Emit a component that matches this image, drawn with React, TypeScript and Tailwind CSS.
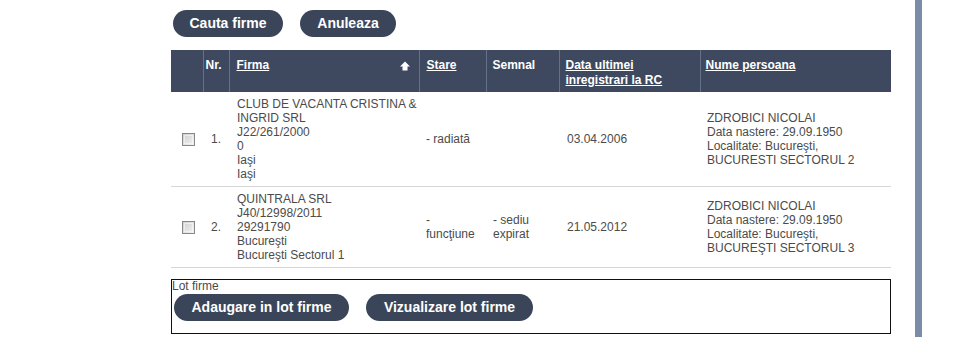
import React from "react";

function Checkbox() {
  return (
    <div className="w-[13px] h-[13px] border border-[#888] bg-gradient-to-br from-[#cfcfcf] to-[#f2f2f2] p-[1px]">
      <div className="w-full h-full border border-[#fafafa]/60" />
    </div>
  );
}

function SortUp() {
  return (
    <svg width="10" height="10" viewBox="0 0 10 10" className="block">
      <path d="M5 0.5 L10 5.5 L7.5 5.5 L7.5 9.5 L2.5 9.5 L2.5 5.5 L0 5.5 Z" fill="#ffffff" />
    </svg>
  );
}

function Pill({ children, w }: { children: React.ReactNode; w: string }) {
  return (
    <div
      className={`${w} h-[27px] rounded-full bg-[#3b4559] text-white font-bold text-[14px] leading-[27px] text-center`}
    >
      {children}
    </div>
  );
}

const rows = [
  {
    nr: "1.",
    firma: ["CLUB DE VACANTA CRISTINA &", "INGRID SRL", "J22/261/2000", "0", "Iaşi", "Iaşi"],
    stare: ["- radiată"],
    semnal: [] as string[],
    data: "03.04.2006",
    nume: ["ZDROBICI NICOLAI", "Data nastere: 29.09.1950", "Localitate: Bucureşti,", "BUCURESTI SECTORUL 2"],
  },
  {
    nr: "2.",
    firma: ["QUINTRALA SRL", "J40/12998/2011", "29291790", "Bucureşti", "Bucureşti Sectorul 1"],
    stare: ["-", "funcţiune"],
    semnal: ["- sediu", "expirat"],
    data: "21.05.2012",
    nume: ["ZDROBICI NICOLAI", "Data nastere: 29.09.1950", "Localitate: Bucureşti,", "BUCUREŞTI SECTORUL 3"],
  },
];

function Lines({ items }: { items: string[] }) {
  return (
    <>
      {items.map((t, i) => (
        <div key={i} className="whitespace-nowrap">
          {t}
        </div>
      ))}
    </>
  );
}

export default function App() {
  return (
    <div
      className="flex w-[956px] h-[337px] bg-white overflow-hidden"
      style={{ fontFamily: '"Liberation Sans", Arial, sans-serif' }}
    >
      <div className="ml-[171px] w-[720px] flex flex-col">
        <div className="flex gap-[17px] ml-[2px] mt-[10px]">
          <Pill w="w-[110px]">Cauta firme</Pill>
          <Pill w="w-[96px]">Anuleaza</Pill>
        </div>

        <table className="mt-[13px] w-[720px] table-fixed border-collapse text-[12px]">
          <colgroup>
            <col className="w-[32px]" />
            <col className="w-[26px]" />
            <col className="w-[190px]" />
            <col className="w-[67px]" />
            <col className="w-[73px]" />
            <col className="w-[141px]" />
            <col className="w-[191px]" />
          </colgroup>
          <thead>
            <tr className="h-[42px] bg-[#3e4960] text-white font-bold leading-[15px] align-top text-left">
              <th className="p-0" />
              <th className="border-l border-[#65708a] pt-[8px] pl-[2px] font-bold">Nr.</th>
              <th className="border-l border-[#65708a] pt-[8px] pl-[7px] pr-[9px] font-bold">
                <div className="flex justify-between items-start">
                  <span className="underline">Firma</span>
                  <span className="mt-[3px]">
                    <SortUp />
                  </span>
                </div>
              </th>
              <th className="border-l border-[#65708a] pt-[8px] pl-[7px] font-bold">
                <span className="underline">Stare</span>
              </th>
              <th className="border-l border-[#65708a] pt-[8px] pl-[6px] font-bold">Semnal</th>
              <th className="border-l border-[#65708a] pt-[8px] pl-[6px] font-bold">
                <span className="underline">
                  Data ultimei
                  <br />
                  inregistrari la RC
                </span>
              </th>
              <th className="border-l border-[#65708a] pt-[8px] pl-[5px] font-bold">
                <span className="underline">Nume persoana</span>
              </th>
            </tr>
          </thead>
          <tbody className="text-[#4b4b4b] leading-[14px]">
            {rows.map((r) => (
              <tr key={r.nr} className="border-b border-[#d6d6d6] align-middle">
                <td className="pl-[11px] py-[5px]">
                  <Checkbox />
                </td>
                <td className="pl-[8px] py-[5px]">{r.nr}</td>
                <td className="pl-[8px] py-[5px]">
                  <Lines items={r.firma} />
                </td>
                <td className="pl-[7px] py-[5px]">
                  <Lines items={r.stare} />
                </td>
                <td className="pl-[7px] py-[5px]">
                  <Lines items={r.semnal} />
                </td>
                <td className="pl-[8px] py-[5px]">{r.data}</td>
                <td className="pl-[7px] py-[5px]">
                  <Lines items={r.nume} />
                </td>
              </tr>
            ))}
          </tbody>
        </table>

        <div className="mt-[11px] h-[55px] border border-[#111]">
          <div className="text-[12px] leading-[13px] text-[#4b4b4b]">Lot firme</div>
          <div className="flex gap-[17px] ml-[2px] mt-[1px]">
            <Pill w="w-[175px]">Adaugare in lot firme</Pill>
            <Pill w="w-[167px]">Vizualizare lot firme</Pill>
          </div>
        </div>
      </div>
      <div className="ml-[24px] w-[7px] h-full bg-[#7b8ca6]" />
    </div>
  );
}
